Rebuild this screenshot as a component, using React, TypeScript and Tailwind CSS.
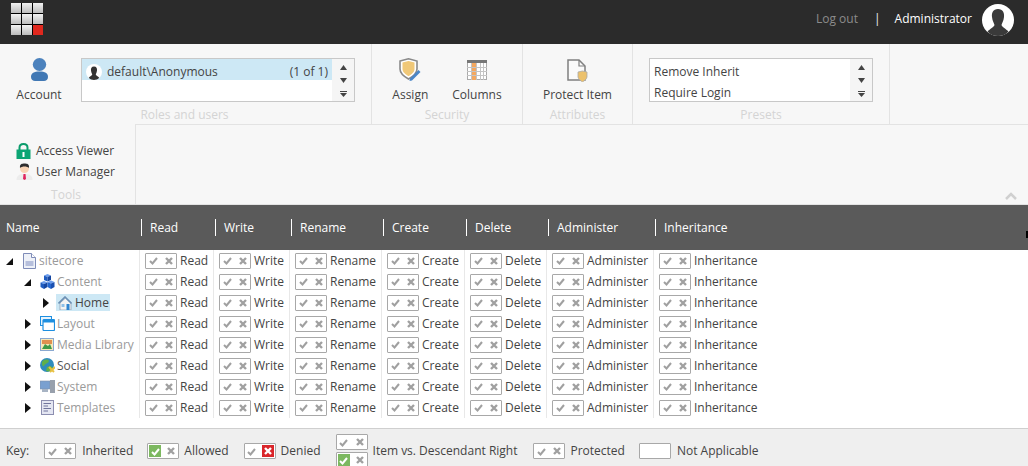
import React from 'react';

const columns = [
  { name: 'Read', width: 'w-[74px]' },
  { name: 'Write', width: 'w-[76px]' },
  { name: 'Rename', width: 'w-[92px]' },
  { name: 'Create', width: 'w-[83px]' },
  { name: 'Delete', width: 'w-[82px]' },
  { name: 'Administer', width: 'w-[107px]' },
  { name: 'Inheritance', width: 'w-[110px]' },
];

const CheckMark = ({ color = '#a0a0a0' }: { color?: string }) => (
  <svg width="9" height="9" viewBox="0 0 9 9">
    <path d="M1 5 L3.500 7.500 L8 2" fill="none" stroke={color} strokeWidth="2" />
  </svg>
);

const CrossMark = ({ color = '#a0a0a0' }: { color?: string }) => (
  <svg width="8" height="8" viewBox="0 0 8 8">
    <path d="M1 1 L7 7 M7 1 L1 7" fill="none" stroke={color} strokeWidth="2.400" />
  </svg>
);

const RightBox = ({ kind = 'inherited' }: { kind?: 'inherited' | 'allowed' | 'denied' | 'empty' }) => (
  <span className="flex h-[16px] w-[32px] shrink-0 items-center justify-between rounded-[1px] border border-[#a8a8a8] bg-white">
    {kind !== 'empty' && (
      <>
        <span className={`ml-[1px] flex h-[12px] w-[12px] items-center justify-center ${kind === 'allowed' ? 'bg-[#7cb860]' : ''}`}>
          <CheckMark color={kind === 'allowed' ? '#ffffff' : '#a0a0a0'} />
        </span>
        <span className={`mr-[1px] flex h-[12px] w-[12px] items-center justify-center ${kind === 'denied' ? 'bg-[#d9252a]' : ''}`}>
          <CrossMark color={kind === 'denied' ? '#ffffff' : '#a0a0a0'} />
        </span>
      </>
    )}
  </span>
);

const Logo = () => (
  <div className="grid grid-cols-3 gap-[1px] bg-black">
    {[0, 1, 2, 3, 4, 5, 6, 7].map(i => (
      <div key={i} className="h-[10px] w-[10px] bg-gradient-to-b from-[#f2f2f2] to-[#bcbcbc]" />
    ))}
    <div className="h-[10px] w-[10px] bg-[#e0281e]" />
  </div>
);

const Avatar = ({ size, fig = '#3a3a3a' }: { size: number; fig?: string }) => (
  <svg width={size} height={size} viewBox="0 0 32 32">
    <circle cx="16" cy="16" r="16" fill="#ffffff" />
    <path d="M16 5 C11 5 9.500 9 10 13 C10.400 17 12 19 12.500 21 C12 23 8 25 5.500 27.500 C8 30.500 12 32 16 32 C20 32 24 30.500 26.500 27.500 C24 25 20 23 19.500 21 C20 19 21.600 17 22 13 C22.500 9 21 5 16 5 Z" fill={fig} />
  </svg>
);

const ScrollButtons = () => (
  <div className="flex w-[22px] shrink-0 flex-col items-center gap-[8px] bg-[#f5f5f5] pt-[6px]">
    <svg width="7" height="5" viewBox="0 0 7 5"><path d="M3.500 0 L7 5 H0 Z" fill="#444" /></svg>
    <svg width="7" height="5" viewBox="0 0 7 5"><path d="M0 0 H7 L3.500 5 Z" fill="#444" /></svg>
    <svg width="7" height="6" viewBox="0 0 7 6"><path d="M0 0 H7 V1 H0 Z M0 2 H7 L3.500 6 H3.500 Z" fill="#444" /></svg>
  </div>
);

const ChunkLabel = ({ children }: { children: React.ReactNode }) => (
  <div className="text-center leading-[18px] text-[#d4d4d4]">{children}</div>
);

const AccountIcon = () => (
  <svg width="17" height="23" viewBox="0 0 17 23">
    <ellipse cx="8.500" cy="6.500" rx="6.700" ry="6.500" fill="#4c82bd" />
    <path d="M0 19 C0 15 3 13.500 8.500 13.500 C14 13.500 17 15 17 19 C17 21.500 15 23 13 23 H4 C2 23 0 21.500 0 19 Z" fill="#4178b4" />
  </svg>
);

const ShieldIcon = () => (
  <svg width="22" height="24" viewBox="0 0 22 24">
    <path d="M1 3 L9.500 0.800 L18 3 V11 C18 15.500 14 18.500 9.500 21 C5 18.500 1 15.500 1 11 Z" fill="#ffffff" stroke="#8a8a8a" strokeWidth="1.600" />
    <path d="M3.500 4.500 L9.500 3 L15.500 4.500 V11 C15.500 14 12.500 16.500 9.500 18.300 C6.500 16.500 3.500 14 3.500 11 Z" fill="#f0c878" />
    <path d="M11 20.500 L19.500 12 L21.500 14 L13 22.500 L10.500 23 Z" fill="#4a86c8" />
  </svg>
);

const ColumnsIcon = () => (
  <svg width="20" height="20" viewBox="0 0 20 20">
    <rect x="0.500" y="0.500" width="19" height="19" fill="#ffffff" stroke="#aaa" />
    <rect x="0" y="0" width="20" height="3" fill="#777" />
    <rect x="5" y="3" width="4" height="17" fill="#f4a860" />
    <path d="M0 7.500 H20 M0 11.500 H20 M0 15.500 H20 M4.500 3 V20 M9.500 3 V20 M13.500 3 V20 M16.500 3 V20" stroke="#c4c4c4" strokeWidth="1" />
  </svg>
);

const ProtectIcon = () => (
  <svg width="21" height="23" viewBox="0 0 21 23">
    <path d="M1 1 H12 L18 7 V21 H1 Z" fill="#fafafa" stroke="#808080" strokeWidth="1.500" />
    <path d="M12 1 V7 H18" fill="none" stroke="#808080" strokeWidth="1.200" />
    <path d="M11 13 L15.500 12 L20 13 V18 C20 20 17 22 15.500 23 C14 22 11 20 11 18 Z" fill="#ecc16c" stroke="#aaa" strokeWidth="0.800" />
  </svg>
);

const LockIcon = () => (
  <svg width="15" height="16" viewBox="0 0 15 16">
    <path d="M3.500 7 V4.500 C3.500 2 5.500 1 7.500 1 C9.500 1 11.500 2 11.500 4.500 V7" fill="none" stroke="#0c9c6c" strokeWidth="2" />
    <rect x="0.500" y="6.500" width="14" height="9.500" fill="#0ca574" />
    <rect x="6.500" y="9" width="2" height="5" fill="#ffffff" />
  </svg>
);

const ManagerIcon = () => (
  <svg width="17" height="17" viewBox="0 0 17 17">
    <path d="M0.500 17 C0.500 12 4 11 8.500 11 C13 11 16.500 12 16.500 17 Z" fill="#ececec" />
    <circle cx="8.500" cy="5.500" r="4.500" fill="#f8d3b4" />
    <path d="M4 5 C3.500 1 6 0.500 8.500 0.500 C11 0.500 13.500 1 13 5 C11 3 6 3 4 5 Z" fill="#2e2e2e" />
    <path d="M7.500 11 H9.500 L10 16 L8.500 17 L7 16 Z" fill="#e0245e" />
  </svg>
);

const DocIcon = () => (
  <svg width="13" height="16" viewBox="0 0 13 16">
    <path d="M0.500 0.500 H8.500 L12.500 4.500 V15.500 H0.500 Z" fill="#eef1f8" stroke="#7f8cb8" />
    <path d="M8.500 0.500 V4.500 H12.500" fill="#fff" stroke="#7f8cb8" />
    <rect x="2.500" y="8" width="8" height="5" fill="#b6bfdc" />
  </svg>
);

const ContentIcon = () => (
  <svg width="15" height="15" viewBox="0 0 15 15">
    <path d="M7.500 0 L11 1.500 L7.500 3 L4 1.500 Z" fill="#6a9cec" />
    <path d="M4 1.500 L7.500 3 V7.500 L4 6 Z" fill="#1f5cc0" />
    <path d="M11 1.500 V6 L7.500 7.500 V3 Z" fill="#1646a0" />
    <path d="M4 7 L7.500 8.500 L4 10 L0.500 8.500 Z" fill="#6a9cec" />
    <path d="M0.500 8.500 L4 10 V15 L0.500 13 Z" fill="#1f5cc0" />
    <path d="M7.500 8.500 V13 L4 15 V10 Z" fill="#1646a0" />
    <path d="M11 6.500 L14.500 8 L11 9.500 L7.500 8 Z" fill="#6a9cec" />
    <path d="M7.500 8 L11 9.500 V15 L7.500 13 Z" fill="#2568d0" />
    <path d="M14.500 8 V13 L11 15 V9.500 Z" fill="#1a50b0" />
  </svg>
);

const HomeIcon = () => (
  <svg width="14" height="14" viewBox="0 0 14 14">
    <path d="M2 7 V14 H13 V7 L7.500 2 Z" fill="#f4f4f4" stroke="#8898b0" strokeWidth="0.700" />
    <path d="M0.500 7.500 L7 1 L13.500 7.500" fill="none" stroke="#6c90b4" strokeWidth="1.600" />
    <rect x="8.500" y="8" width="3" height="6" fill="#2f84d0" />
    <rect x="3.500" y="8" width="3" height="3" fill="#8fc0e8" />
  </svg>
);

const LayoutIcon = () => (
  <svg width="15" height="15" viewBox="0 0 15 15">
    <rect x="0.500" y="0.500" width="11" height="9" fill="#e8f4fd" stroke="#1e8fe0" />
    <rect x="3" y="3.500" width="11.500" height="11" rx="1" fill="#ffffff" stroke="#1e8fe0" strokeWidth="1.200" />
    <rect x="3" y="3.500" width="11.500" height="3" fill="#1e8fe0" />
  </svg>
);

const MediaIcon = () => (
  <svg width="14" height="13" viewBox="0 0 14 13">
    <rect x="0.500" y="0.500" width="13" height="12" fill="#f6e8b8" stroke="#8aa8d0" />
    <rect x="2" y="2" width="10" height="4" fill="#e09050" />
    <path d="M2 11 L5 6 L8 8 L10 6 L12 11 Z" fill="#3f9a48" />
  </svg>
);

const SocialIcon = () => (
  <svg width="15" height="15" viewBox="0 0 15 15">
    <circle cx="7" cy="7" r="7" fill="#2f8cbc" />
    <path d="M2 4 C4 1 8 1 9 3 C8 6 5 5 4 8 C3 9 1.500 7 2 4 Z M7 9 C9 8 12 8 13 10 C11 13 8 14 6 13 Z" fill="#5fb04a" />
    <path d="M9 9 L14 14 M10 14 L15 9" stroke="#e8c040" strokeWidth="2" />
  </svg>
);

const SystemIcon = () => (
  <svg width="15" height="13" viewBox="0 0 15 13">
    <rect x="0" y="1" width="10" height="8" fill="#7aa0d0" stroke="#8090a8" strokeWidth="0.600" />
    <rect x="2" y="9" width="6" height="3" fill="#a8b4c4" />
    <rect x="10" y="0" width="5" height="13" fill="#98a0ac" />
  </svg>
);

const TemplatesIcon = () => (
  <svg width="13" height="15" viewBox="0 0 13 15">
    <rect x="0.500" y="0.500" width="12" height="14" fill="#e4e6f2" stroke="#8c8eb0" />
    <path d="M2.500 3.500 H10 M2.500 6 H7 M2.500 8.500 H10 M2.500 11 H7" stroke="#70749c" strokeWidth="1" />
  </svg>
);

const Caret = ({ open }: { open: boolean }) => (
  <svg className="shrink-0" width="8" height="10" viewBox="0 0 8 10">
    {open ? <path d="M7 2 V9 H0 Z" fill="#111" /> : <path d="M1 0 L7 5 L1 10 Z" fill="#111" />}
  </svg>
);

const tree = [
  { name: 'sitecore', indent: 'pl-[6px]', open: true, icon: <DocIcon />, text: 'text-[#9a9a9a]' },
  { name: 'Content', indent: 'pl-[24px]', open: true, icon: <ContentIcon />, text: 'text-[#9a9a9a]' },
  { name: 'Home', indent: 'pl-[42px]', open: false, icon: <HomeIcon />, text: 'text-[#444]', selected: true },
  { name: 'Layout', indent: 'pl-[24px]', open: false, icon: <LayoutIcon />, text: 'text-[#9a9a9a]' },
  { name: 'Media Library', indent: 'pl-[24px]', open: false, icon: <MediaIcon />, text: 'text-[#9a9a9a]' },
  { name: 'Social', indent: 'pl-[24px]', open: false, icon: <SocialIcon />, text: 'text-[#555]' },
  { name: 'System', indent: 'pl-[24px]', open: false, icon: <SystemIcon />, text: 'text-[#9a9a9a]' },
  { name: 'Templates', indent: 'pl-[24px]', open: false, icon: <TemplatesIcon />, text: 'text-[#9a9a9a]' },
];

export default function App() {
  return (
    <div className="relative flex h-[466px] w-[1028px] flex-col overflow-hidden bg-white text-[12px] text-[#444] [font-family:'Open_Sans',sans-serif]">
      {/* top bar */}
      <div className="flex h-[44px] shrink-0 items-start bg-[#2b2b2b] pl-[11px] pr-[14px] pt-[3px]">
        <Logo />
        <div className="ml-auto flex items-start leading-[32px]">
          <span className="text-[#8b8b8b]">Log out</span>
          <span className="ml-[16px] text-[#f0f0f0]">|</span>
          <span className="ml-[14px] text-white">Administrator</span>
          <span className="ml-[10px] mt-[1px]"><Avatar size={32} /></span>
        </div>
      </div>

      {/* ribbon */}
      <div className="relative flex h-[161px] shrink-0 flex-col border-b border-[#e3e3e3] bg-[#f7f7f7]">
        <div className="flex h-[80px] shrink-0">
          <div className="w-[372px] shrink-0 border-r border-[#e3e3e3] pt-[14px]">
            <div className="flex pl-[16px]">
              <div className="flex w-[46px] shrink-0 flex-col items-center">
                <div className="h-[28px]"><AccountIcon /></div>
                <span className="leading-[18px]">Account</span>
              </div>
              <div className="ml-[19px] flex h-[44px] w-[274px] border border-[#c8c8c8] bg-white">
                <div className="flex-1">
                  <div className="flex h-[21px] items-center bg-[#cde8f5] pl-[4px] pr-[4px] pt-[4px]">
                    <Avatar size={16} fig="#333" />
                    <span className="ml-[5px]">default\Anonymous</span>
                    <span className="ml-auto">(1 of 1)</span>
                  </div>
                </div>
                <ScrollButtons />
              </div>
            </div>
            <div className="mt-[2px] pr-[2px]"><ChunkLabel>Roles and users</ChunkLabel></div>
          </div>
          <div className="w-[151px] shrink-0 border-r border-[#e3e3e3] pt-[14px]">
            <div className="flex justify-center gap-[24px]">
              <div className="flex flex-col items-center">
                <div className="h-[28px]"><ShieldIcon /></div>
                <span className="leading-[18px]">Assign</span>
              </div>
              <div className="flex flex-col items-center">
                <div className="h-[28px] pt-[2px]"><ColumnsIcon /></div>
                <span className="leading-[18px]">Columns</span>
              </div>
            </div>
            <div className="mt-[2px]"><ChunkLabel>Security</ChunkLabel></div>
          </div>
          <div className="w-[110px] shrink-0 border-r border-[#e3e3e3] pt-[14px]">
            <div className="flex flex-col items-center">
              <div className="h-[28px] pt-[1px]"><ProtectIcon /></div>
              <span className="leading-[18px]">Protect Item</span>
            </div>
            <div className="mt-[2px]"><ChunkLabel>Attributes</ChunkLabel></div>
          </div>
          <div className="w-[257px] shrink-0 border-r border-[#e3e3e3] pt-[14px]">
            <div className="ml-[16px] flex h-[44px] w-[224px] border border-[#c8c8c8] bg-white">
              <div className="flex-1 pl-[4px] pt-[2px]">
                <div className="leading-[21px]">Remove Inherit</div>
                <div className="leading-[21px]">Require Login</div>
              </div>
              <ScrollButtons />
            </div>
            <div className="mt-[4px]"><ChunkLabel>Presets</ChunkLabel></div>
          </div>
        </div>
        <div className="flex flex-1">
          <div className="w-[136px] shrink-0 border-r border-[#e3e3e3] pl-[16px] pt-[16px]">
            <div className="flex h-[21px] items-center gap-[5px]"><LockIcon /><span>Access Viewer</span></div>
            <div className="flex h-[21px] items-center gap-[3px]"><ManagerIcon /><span>User Manager</span></div>
            <div className="mt-[4px] w-[100px]"><ChunkLabel>Tools</ChunkLabel></div>
          </div>
          <div className="flex-1 border-t border-[#e3e3e3]" />
        </div>
        <svg className="absolute bottom-[4px] right-[11px]" width="12" height="8" viewBox="0 0 12 8">
          <path d="M1 7 L6 2 L11 7" fill="none" stroke="#d0d0d0" strokeWidth="2.500" />
        </svg>
      </div>

      {/* table header */}
      <div className="relative flex h-[45px] shrink-0 items-center bg-[#5a5a5a] text-white">
        <div className="w-[140px] shrink-0 pl-[6px]">Name</div>
        {columns.map(col => (
          <div key={col.name} className={`${col.width} shrink-0 pl-[1px]`}>
            <div className="flex h-[17px] items-center border-l border-white pl-[8px]">{col.name}</div>
          </div>
        ))}
        <span className="absolute left-[1026px] top-[26px] h-[7px] w-[6px] border-2 border-black bg-white" />
      </div>

      {/* rows */}
      <div className="flex-1">
        {tree.map(item => (
          <div key={item.name} className="flex h-[21px]">
            <div className={`flex w-[140px] shrink-0 items-center border-r border-[#e8e8e8] ${item.indent}`}>
              <Caret open={item.open} />
              <span className={`ml-[6px] flex h-[17px] items-center whitespace-nowrap ${item.text} ${item.selected ? 'bg-[#cde8f5] pr-[1px]' : ''}`}>
                <span className="flex w-[18px] shrink-0 justify-center">{item.icon}</span>
                <span className="ml-[1px]">{item.name}</span>
              </span>
            </div>
            {columns.map(col => (
              <div key={col.name} className={`flex ${col.width} shrink-0 items-center gap-[3px] border-r border-[#e8e8e8] pl-[5px] last:border-r-0`}>
                <RightBox />
                <span>{col.name}</span>
              </div>
            ))}
          </div>
        ))}
      </div>

      {/* key */}
      <div className="h-[38px] shrink-0 overflow-hidden border-t border-[#cfcfcf] bg-[#efefef]">
        <div className="flex h-[44px] items-center pl-[6px]">
          <span>Key:</span>
          <span className="ml-[15px]"><RightBox /></span>
          <span className="ml-[6px]">Inherited</span>
          <span className="ml-[14px]"><RightBox kind="allowed" /></span>
          <span className="ml-[5px]">Allowed</span>
          <span className="ml-[15px]"><RightBox kind="denied" /></span>
          <span className="ml-[5px]">Denied</span>
          <span className="ml-[15px] flex flex-col gap-[2px]">
            <RightBox />
            <RightBox kind="allowed" />
          </span>
          <span className="ml-[5px]">Item vs. Descendant Right</span>
          <span className="ml-[16px]"><RightBox /></span>
          <span className="ml-[5px]">Protected</span>
          <span className="ml-[14px]"><RightBox kind="empty" /></span>
          <span className="ml-[6px]">Not Applicable</span>
        </div>
      </div>
    </div>
  );
}
